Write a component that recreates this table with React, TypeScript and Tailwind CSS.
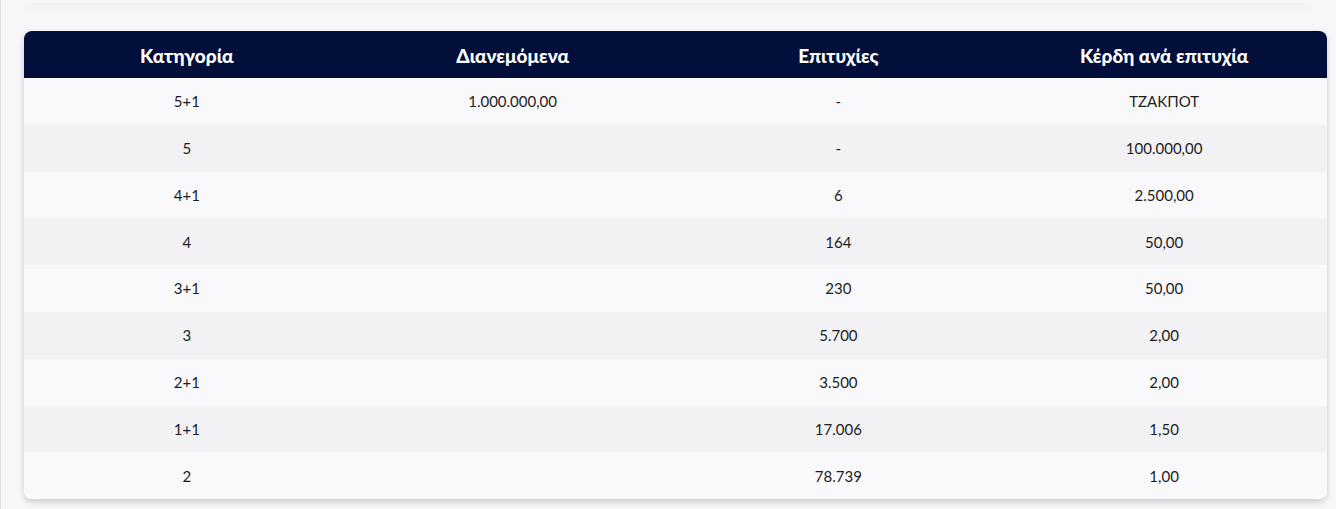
const rows = [
  ['5+1', '1.000.000,00', '-', 'ΤΖΑΚΠΟΤ'],
  ['5', '', '-', '100.000,00'],
  ['4+1', '', '6', '2.500,00'],
  ['4', '', '164', '50,00'],
  ['3+1', '', '230', '50,00'],
  ['3', '', '5.700', '2,00'],
  ['2+1', '', '3.500', '2,00'],
  ['1+1', '', '17.006', '1,50'],
  ['2', '', '78.739', '1,00'],
];

const headers = ['Κατηγορία', 'Διανεμόμενα', 'Επιτυχίες', 'Κέρδη ανά επιτυχία'];

export default function App() {
  return (
    <div
      className="h-[509px] w-[1336px] overflow-hidden border-l border-[#dcdcdf] bg-[#f7f7f9]"
      style={{ fontFamily: 'Lato, "Noto Sans", sans-serif' }}
    >
      {/* bottom edge of the card above */}
      <div className="mx-[25px] h-[3px] bg-[#f9f9fb] shadow-[0_3px_8px_rgba(0,0,0,0.07)]" />

      <div className="ml-[23px] mr-[9px] mt-[28px] overflow-hidden rounded-lg shadow-[0_3px_6px_rgba(0,0,0,0.18)]">
        <div className="grid h-[47px] grid-cols-4 items-center bg-[#020f3b] pt-[3px] text-[19px] font-black text-white">
          {headers.map((h) => (
            <div key={h} className="text-center">{h}</div>
          ))}
        </div>
        {rows.map((r, i) => (
          <div
            key={i}
            className={`grid h-[46.8px] grid-cols-4 items-center text-[15px] text-[#1c1c22] ${
              i % 2 === 0 ? 'bg-[#f9f9fb]' : 'bg-[#f2f2f4]'
            }`}
          >
            {r.map((c, j) => (
              <div key={j} className="text-center">{c}</div>
            ))}
          </div>
        ))}
      </div>
    </div>
  );
}
